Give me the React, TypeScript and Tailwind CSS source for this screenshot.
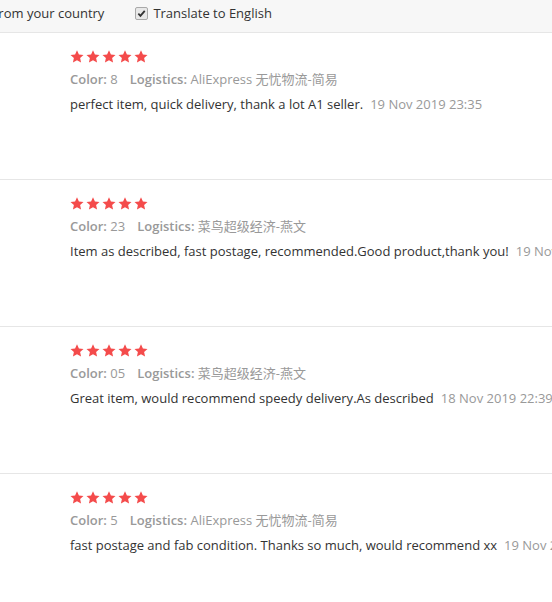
import React from "react";

type Review = {
  color: string;
  logistics: string;
  text: string;
  date: string;
};

const reviews: Review[] = [
  {
    color: "8",
    logistics: "AliExpress 无忧物流-简易",
    text: "perfect item, quick delivery, thank a lot A1 seller.",
    date: "19 Nov 2019 23:35",
  },
  {
    color: "23",
    logistics: "菜鸟超级经济-燕文",
    text: "Item as described, fast postage, recommended.Good product,thank you!",
    date: "19 Nov 2019 23:10",
  },
  {
    color: "05",
    logistics: "菜鸟超级经济-燕文",
    text: "Great item, would recommend speedy delivery.As described",
    date: "18 Nov 2019 22:39",
  },
  {
    color: "5",
    logistics: "AliExpress 无忧物流-简易",
    text: "fast postage and fab condition. Thanks so much, would recommend xx",
    date: "19 Nov 2019 21:04",
  },
];

function Star() {
  return (
    <svg width="14" height="13" viewBox="0 0 24 23" className="block">
      <path
        d="M12 0.5l3.4 7.4 8.1 0.9-6 5.5 1.7 8-7.2-4.1-7.2 4.1 1.7-8-6-5.5 8.1-0.9z"
        fill="#f44b4b"
      />
    </svg>
  );
}

export default function App() {
  return (
    <div
      className="w-[552px] h-[602px] overflow-hidden bg-white text-[13px]"
      style={{ fontFamily: '"Open Sans", "Noto Sans CJK SC", sans-serif' }}
    >
      {/* filter bar */}
      <div className="h-[33px] flex items-start pt-[4px] bg-[#f7f7f7] border-b border-[#e6e6e6] text-[#333] whitespace-nowrap">
        <span className="ml-[-6px]">from your country</span>
        <span className="ml-[31px] flex items-center gap-[5px]">
          <span className="w-[13px] h-[13px] rounded-[2px] border border-[#a9a9a9] bg-[#e8e8e8] flex items-center justify-center">
            <svg width="9" height="9" viewBox="0 0 10 10">
              <path d="M1.5 5.2l2.3 2.4 4.8-5.6" stroke="#333" strokeWidth="2" fill="none" />
            </svg>
          </span>
          Translate to English
        </span>
      </div>

      {reviews.map((r, i) => (
        <div
          key={i}
          className="h-[147px] border-b border-[#e6e6e6] pl-[70px] pt-[16px] whitespace-nowrap"
        >
          <div className="flex gap-[2px] h-[14px] items-center">
            <Star />
            <Star />
            <Star />
            <Star />
            <Star />
          </div>
          <div className="mt-[7px] leading-[18px] text-[#999]">
            <span className="font-semibold">Color:</span> {r.color}
            <span className="ml-[12px] font-semibold">Logistics:</span> {r.logistics}
          </div>
          <div className="mt-[7px] leading-[18px] text-[#333]">
            {r.text}
            <span className="ml-[7px] text-[#999]">{r.date}</span>
          </div>
        </div>
      ))}
    </div>
  );
}
